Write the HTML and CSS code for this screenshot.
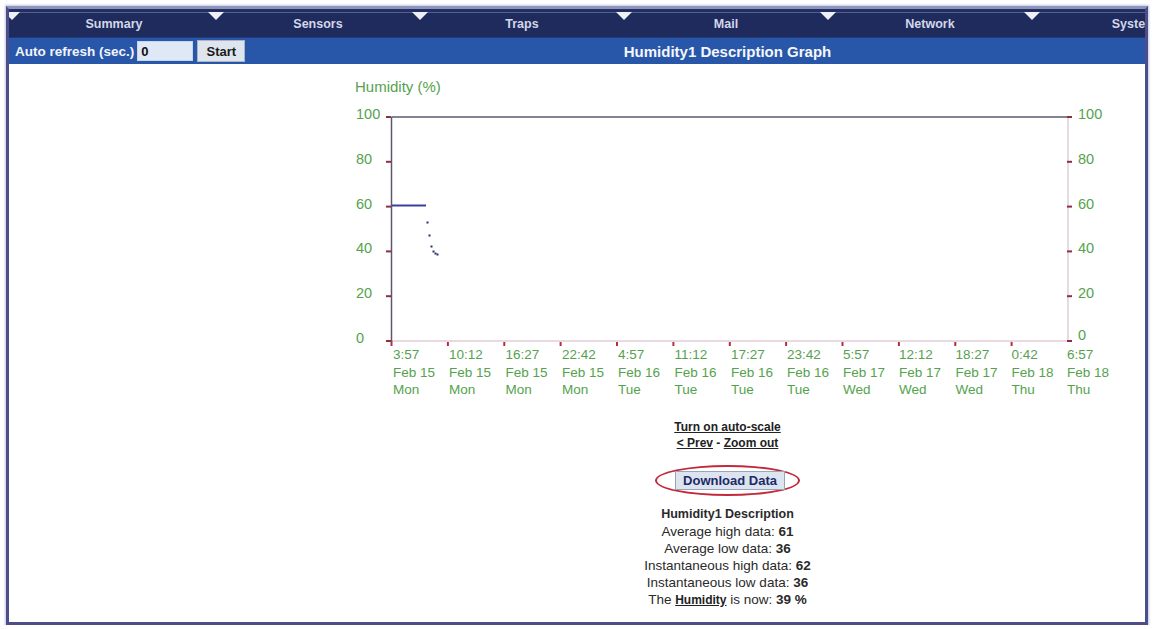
FILE: index.html
```html
<!DOCTYPE html>
<html lang="en">
<head>
<meta charset="utf-8">
<title>Humidity1 Description Graph</title>
<link rel="stylesheet" href="styles.css">
</head>
<body>
<div class="frame">
  <nav class="menu">
    <div class="menu-item">Summary</div>
    <div class="menu-item">Sensors</div>
    <div class="menu-item">Traps</div>
    <div class="menu-item">Mail</div>
    <div class="menu-item">Network</div>
    <div class="menu-item">System</div>
  </nav>
  <div class="toolbar">
    <div class="refresh">
      <span class="refresh-label">Auto refresh (sec.)</span>
      <input class="refresh-input" type="text" value="0">
      <button class="start-btn" type="button">Start</button>
    </div>
    <div class="page-title">Humidity1 Description Graph</div>
  </div>
  <div class="content">
    <div class="side"></div>
    <div class="main">
      <svg class="chart" width="835" height="336" viewBox="0 0 835 336" xmlns="http://www.w3.org/2000/svg">
        <text class="axis-title" x="45" y="28">Humidity (%)</text>
        <!-- axes -->
        <line x1="758" y1="53" x2="758" y2="277" stroke="#e2ccd6" stroke-width="1.5"/>
        <line x1="81.5" y1="277" x2="758" y2="277" stroke="#e2ccd6" stroke-width="1.5"/>
        <line x1="81.5" y1="53" x2="758" y2="53" stroke="#5c5a6c" stroke-width="1.5"/>
        <line x1="81.5" y1="53" x2="81.5" y2="277" stroke="#5c5670" stroke-width="1.5"/>
        <!-- y ticks -->
        <g stroke="#8a3040" stroke-width="2">
          <line x1="76" y1="53" x2="81" y2="53"/>
          <line x1="76" y1="97.8" x2="81" y2="97.8"/>
          <line x1="76" y1="142.6" x2="81" y2="142.6"/>
          <line x1="76" y1="187.4" x2="81" y2="187.4"/>
          <line x1="76" y1="232.2" x2="81" y2="232.2"/>
          <line x1="76" y1="277" x2="81" y2="277"/>
          <line x1="757" y1="53" x2="762" y2="53"/>
          <line x1="757" y1="97.8" x2="762" y2="97.8"/>
          <line x1="757" y1="142.6" x2="762" y2="142.6"/>
          <line x1="757" y1="187.4" x2="762" y2="187.4"/>
          <line x1="757" y1="232.2" x2="762" y2="232.2"/>
          <line x1="757" y1="277" x2="762" y2="277"/>
        </g>
        <!-- x ticks -->
        <g stroke="#b03040" stroke-width="2">
          <line x1="81.5" y1="277" x2="81.5" y2="282"/>
          <line x1="137.9" y1="278" x2="137.9" y2="282"/>
          <line x1="194.3" y1="278" x2="194.3" y2="282"/>
          <line x1="250.6" y1="278" x2="250.6" y2="282"/>
          <line x1="307" y1="278" x2="307" y2="282"/>
          <line x1="363.4" y1="278" x2="363.4" y2="282"/>
          <line x1="419.8" y1="278" x2="419.8" y2="282"/>
          <line x1="476.1" y1="278" x2="476.1" y2="282"/>
          <line x1="532.5" y1="278" x2="532.5" y2="282"/>
          <line x1="588.9" y1="278" x2="588.9" y2="282"/>
          <line x1="645.3" y1="278" x2="645.3" y2="282"/>
          <line x1="701.6" y1="278" x2="701.6" y2="282"/>
        </g>
        <!-- y labels -->
        <g class="ylab">
          <text x="46" y="55">100</text>
          <text x="46" y="99.8">80</text>
          <text x="46" y="144.6">60</text>
          <text x="46" y="189.4">40</text>
          <text x="46" y="234.2">20</text>
          <text x="46" y="279">0</text>
          <text x="768" y="55">100</text>
          <text x="768" y="99.8">80</text>
          <text x="768" y="144.6">60</text>
          <text x="768" y="189.4">40</text>
          <text x="768" y="234.2">20</text>
          <text x="768" y="276">0</text>
        </g>
        <!-- x labels -->
        <g class="xlab">
          <text x="83" y="295"><tspan x="83">3:57</tspan><tspan x="83" dy="17.5">Feb 15</tspan><tspan x="83" dy="17.5">Mon</tspan></text>
          <text x="139" y="295"><tspan x="139">10:12</tspan><tspan x="139" dy="17.5">Feb 15</tspan><tspan x="139" dy="17.5">Mon</tspan></text>
          <text x="195.5" y="295"><tspan x="195.5">16:27</tspan><tspan x="195.5" dy="17.5">Feb 15</tspan><tspan x="195.5" dy="17.5">Mon</tspan></text>
          <text x="252" y="295"><tspan x="252">22:42</tspan><tspan x="252" dy="17.5">Feb 15</tspan><tspan x="252" dy="17.5">Mon</tspan></text>
          <text x="308" y="295"><tspan x="308">4:57</tspan><tspan x="308" dy="17.5">Feb 16</tspan><tspan x="308" dy="17.5">Tue</tspan></text>
          <text x="364.5" y="295"><tspan x="364.5">11:12</tspan><tspan x="364.5" dy="17.5">Feb 16</tspan><tspan x="364.5" dy="17.5">Tue</tspan></text>
          <text x="421" y="295"><tspan x="421">17:27</tspan><tspan x="421" dy="17.5">Feb 16</tspan><tspan x="421" dy="17.5">Tue</tspan></text>
          <text x="477" y="295"><tspan x="477">23:42</tspan><tspan x="477" dy="17.5">Feb 16</tspan><tspan x="477" dy="17.5">Tue</tspan></text>
          <text x="533" y="295"><tspan x="533">5:57</tspan><tspan x="533" dy="17.5">Feb 17</tspan><tspan x="533" dy="17.5">Wed</tspan></text>
          <text x="589" y="295"><tspan x="589">12:12</tspan><tspan x="589" dy="17.5">Feb 17</tspan><tspan x="589" dy="17.5">Wed</tspan></text>
          <text x="645.5" y="295"><tspan x="645.5">18:27</tspan><tspan x="645.5" dy="17.5">Feb 17</tspan><tspan x="645.5" dy="17.5">Wed</tspan></text>
          <text x="701.5" y="295"><tspan x="701.5">0:42</tspan><tspan x="701.5" dy="17.5">Feb 18</tspan><tspan x="701.5" dy="17.5">Thu</tspan></text>
          <text x="757" y="295"><tspan x="757">6:57</tspan><tspan x="757" dy="17.5">Feb 18</tspan><tspan x="757" dy="17.5">Thu</tspan></text>
        </g>
        <!-- data -->
        <line x1="82" y1="141.5" x2="116" y2="141.5" stroke="#3a3fa0" stroke-width="2"/>
        <g fill="#2a2f70">
          <rect x="116.5" y="157.5" width="2" height="2"/>
          <rect x="118.5" y="170.5" width="2" height="2"/>
          <rect x="120.5" y="181.5" width="2" height="2"/>
          <rect x="122.5" y="186.5" width="2" height="2"/>
          <rect x="124.5" y="188.5" width="2" height="2"/>
          <rect x="126.5" y="189.5" width="2" height="2"/>
        </g>
      </svg>
      <div class="links">
        <div><a class="link" href="#">Turn on auto-scale</a></div>
        <div><a class="link" href="#">&lt; Prev</a> - <a class="link" href="#">Zoom out</a></div>
      </div>
      <div class="download-ring">
        <button class="download-btn" type="button">Download Data</button>
      </div>
      <div class="desc">
        <div class="desc-title">Humidity1 Description</div>
        <div>Average high data: <b>61</b></div>
        <div>Average low data: <b>36</b></div>
        <div>Instantaneous high data: <b>62</b></div>
        <div>Instantaneous low data: <b>36</b></div>
        <div>The <a class="link" href="#">Humidity</a> is now: <b>39 %</b></div>
      </div>
    </div>
  </div>
</div>
</body>
</html>
```

FILE: styles.css
```css
html, body {
  margin: 0;
  padding: 0;
  background: #ffffff;
}

body {
  font-family: "Liberation Sans", Arial, sans-serif;
  color: #222222;
}

.frame {
  box-sizing: border-box;
  width: 1142px;
  height: 619px;
  margin: 6px 0 0 6px;
  border: 3px solid #4b4e8a;
  border-top-color: #8e94bc;
  box-shadow: 0 0 2px 1px #c4c7de;
  overflow: hidden;
  background: #ffffff;
}

.menu {
  display: flex;
  height: 28px;
  padding-left: 3px;
  background: linear-gradient(#232f62 0, #232f62 3px, #56608f 3px, #56608f 4px, #1e2b5c 4px, #1e2b5c 100%);
  overflow: hidden;
}

.menu-item {
  position: relative;
  flex: 0 0 204px;
  display: flex;
  align-items: center;
  justify-content: center;
  padding-top: 2px;
  font-size: 12.5px;
  font-weight: bold;
  color: #d3d7e8;
  white-space: nowrap;
}

.menu-item::before {
  content: "";
  position: absolute;
  left: -8px;
  top: 3px;
  border-left: 8px solid transparent;
  border-right: 8px solid transparent;
  border-top: 8px solid #eef0f7;
}

.toolbar {
  display: grid;
  grid-template-columns: 301px 1fr;
  height: 27px;
  background: #2857aa;
  border-top: 1px solid #20397a;
  box-sizing: border-box;
}

.refresh {
  display: flex;
  align-items: center;
  padding-left: 6px;
}

.refresh-label {
  font-size: 13.5px;
  font-weight: bold;
  color: #f2f4fa;
  margin-right: 3px;
}

.refresh-input {
  box-sizing: border-box;
  width: 56px;
  height: 20px;
  margin: 0 4px 0 0;
  padding: 0 3px;
  border: 1px solid #c8d4ea;
  background: #dfe8f6;
  font-family: "Liberation Sans", Arial, sans-serif;
  font-size: 13px;
  font-weight: bold;
  color: #111111;
}

.start-btn {
  box-sizing: border-box;
  width: 48px;
  height: 22px;
  margin: 0;
  padding: 0;
  border: 1px solid #aab4c4;
  background: #dfe5ee;
  font-family: "Liberation Sans", Arial, sans-serif;
  font-size: 13px;
  font-weight: bold;
  color: #1a1a1a;
}

.page-title {
  display: flex;
  align-items: center;
  justify-content: center;
  font-size: 15px;
  font-weight: bold;
  color: #f4f6fb;
}

.content {
  display: grid;
  grid-template-columns: 301px 1fr;
}

.main {
  display: flex;
  flex-direction: column;
  align-items: center;
}

.chart {
  display: block;
  align-self: flex-start;
  font-family: "Liberation Sans", Arial, sans-serif;
}

.axis-title {
  font-size: 15px;
  fill: #55a24e;
}

.ylab text {
  font-size: 14.5px;
  fill: #55a24e;
}

.xlab text {
  font-size: 13.5px;
  fill: #55a24e;
}

.links {
  margin-top: 19px;
  font-size: 12px;
  font-weight: bold;
  line-height: 16px;
  text-align: center;
  color: #222222;
}

.link {
  color: #222222;
  font-weight: bold;
  text-decoration: underline;
}

.download-ring {
  margin-top: 14px;
  padding: 4px 13px 4px 18px;
  border: 2px solid #c22a3c;
  border-radius: 50%;
}

.download-btn {
  display: block;
  box-sizing: border-box;
  width: 110px;
  height: 19px;
  margin: 0;
  padding: 0;
  border: 1px solid #9aa6b8;
  background: #dce4ef;
  font-family: "Liberation Sans", Arial, sans-serif;
  font-size: 13px;
  font-weight: bold;
  color: #1c2b66;
}

.desc {
  margin-top: 10px;
  font-size: 13.5px;
  line-height: 17px;
  text-align: center;
  color: #2a2a2a;
}

.desc-title {
  font-size: 12.5px;
  font-weight: bold;
}

.desc .link {
  font-size: 12px;
}
```
